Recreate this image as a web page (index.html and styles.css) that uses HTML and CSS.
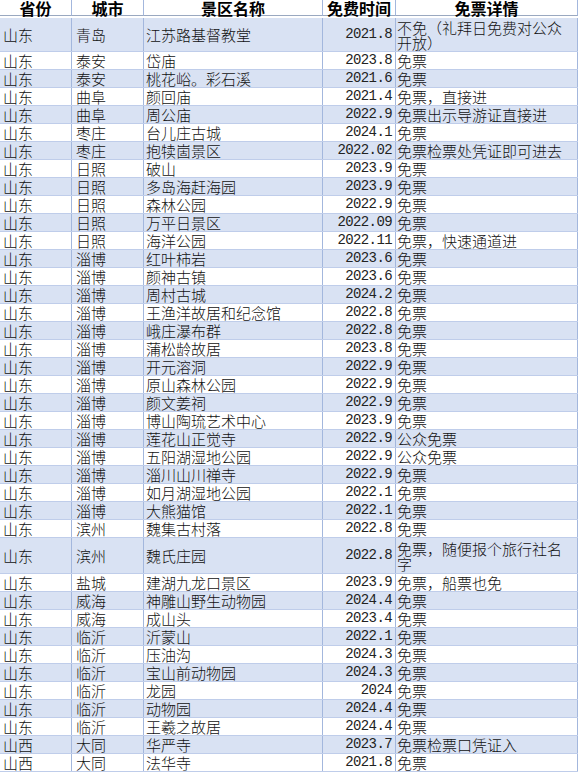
FILE: index.html
```html
<!DOCTYPE html>
<html lang="zh">
<head>
<meta charset="utf-8">
<title>免票景区</title>
<link rel="stylesheet" href="styles.css">
</head>
<body>
<div class="sheet">
  <div class="row head">
    <div class="c">省份</div><div class="c">城市</div><div class="c">景区名称</div><div class="c">免费时间</div><div class="c">免票详情</div>
  </div>
  <div class="row odd tall">
    <div class="c">山东</div><div class="c">青岛</div><div class="c">江苏路基督教堂</div><div class="c n">2021.8</div><div class="c d">不免（礼拜日免费对公众开放）</div>
  </div>
  <div class="row"><div class="c">山东</div><div class="c">泰安</div><div class="c">岱庙</div><div class="c n">2023.8</div><div class="c d">免票</div></div>
  <div class="row odd"><div class="c">山东</div><div class="c">泰安</div><div class="c">桃花峪。彩石溪</div><div class="c n">2021.6</div><div class="c d">免票</div></div>
  <div class="row"><div class="c">山东</div><div class="c">曲阜</div><div class="c">颜回庙</div><div class="c n">2021.4</div><div class="c d">免票，直接进</div></div>
  <div class="row odd"><div class="c">山东</div><div class="c">曲阜</div><div class="c">周公庙</div><div class="c n">2022.9</div><div class="c d">免票出示导游证直接进</div></div>
  <div class="row"><div class="c">山东</div><div class="c">枣庄</div><div class="c">台儿庄古城</div><div class="c n">2024.1</div><div class="c d">免票</div></div>
  <div class="row odd"><div class="c">山东</div><div class="c">枣庄</div><div class="c">抱犊崮景区</div><div class="c n">2022.02</div><div class="c d">免票检票处凭证即可进去</div></div>
  <div class="row"><div class="c">山东</div><div class="c">日照</div><div class="c">破山</div><div class="c n">2023.9</div><div class="c d">免票</div></div>
  <div class="row odd"><div class="c">山东</div><div class="c">日照</div><div class="c">多岛海赶海园</div><div class="c n">2023.9</div><div class="c d">免票</div></div>
  <div class="row"><div class="c">山东</div><div class="c">日照</div><div class="c">森林公园</div><div class="c n">2022.9</div><div class="c d">免票</div></div>
  <div class="row odd"><div class="c">山东</div><div class="c">日照</div><div class="c">万平日景区</div><div class="c n">2022.09</div><div class="c d">免票</div></div>
  <div class="row"><div class="c">山东</div><div class="c">日照</div><div class="c">海洋公园</div><div class="c n">2022.11</div><div class="c d">免票，快速通道进</div></div>
  <div class="row odd"><div class="c">山东</div><div class="c">淄博</div><div class="c">红叶柿岩</div><div class="c n">2023.6</div><div class="c d">免票</div></div>
  <div class="row"><div class="c">山东</div><div class="c">淄博</div><div class="c">颜神古镇</div><div class="c n">2023.6</div><div class="c d">免票</div></div>
  <div class="row odd"><div class="c">山东</div><div class="c">淄博</div><div class="c">周村古城</div><div class="c n">2024.2</div><div class="c d">免票</div></div>
  <div class="row"><div class="c">山东</div><div class="c">淄博</div><div class="c">王渔洋故居和纪念馆</div><div class="c n">2022.8</div><div class="c d">免票</div></div>
  <div class="row odd"><div class="c">山东</div><div class="c">淄博</div><div class="c">峨庄瀑布群</div><div class="c n">2022.8</div><div class="c d">免票</div></div>
  <div class="row"><div class="c">山东</div><div class="c">淄博</div><div class="c">蒲松龄故居</div><div class="c n">2023.8</div><div class="c d">免票</div></div>
  <div class="row odd"><div class="c">山东</div><div class="c">淄博</div><div class="c">开元溶洞</div><div class="c n">2022.9</div><div class="c d">免票</div></div>
  <div class="row"><div class="c">山东</div><div class="c">淄博</div><div class="c">原山森林公园</div><div class="c n">2022.9</div><div class="c d">免票</div></div>
  <div class="row odd"><div class="c">山东</div><div class="c">淄博</div><div class="c">颜文姜祠</div><div class="c n">2022.9</div><div class="c d">免票</div></div>
  <div class="row"><div class="c">山东</div><div class="c">淄博</div><div class="c">博山陶琉艺术中心</div><div class="c n">2023.9</div><div class="c d">免票</div></div>
  <div class="row odd"><div class="c">山东</div><div class="c">淄博</div><div class="c">莲花山正觉寺</div><div class="c n">2022.9</div><div class="c d">公众免票</div></div>
  <div class="row"><div class="c">山东</div><div class="c">淄博</div><div class="c">五阳湖湿地公园</div><div class="c n">2022.9</div><div class="c d">公众免票</div></div>
  <div class="row odd"><div class="c">山东</div><div class="c">淄博</div><div class="c">淄川山川禅寺</div><div class="c n">2022.9</div><div class="c d">免票</div></div>
  <div class="row"><div class="c">山东</div><div class="c">淄博</div><div class="c">如月湖湿地公园</div><div class="c n">2022.1</div><div class="c d">免票</div></div>
  <div class="row odd"><div class="c">山东</div><div class="c">淄博</div><div class="c">大熊猫馆</div><div class="c n">2022.1</div><div class="c d">免票</div></div>
  <div class="row"><div class="c">山东</div><div class="c">滨州</div><div class="c">魏集古村落</div><div class="c n">2022.8</div><div class="c d">免票</div></div>
  <div class="row odd tall2"><div class="c">山东</div><div class="c">滨州</div><div class="c">魏氏庄园</div><div class="c n">2022.8</div><div class="c d">免票，随便报个旅行社名字</div></div>
  <div class="row"><div class="c">山东</div><div class="c">盐城</div><div class="c">建湖九龙口景区</div><div class="c n">2023.9</div><div class="c d">免票，船票也免</div></div>
  <div class="row odd"><div class="c">山东</div><div class="c">威海</div><div class="c">神雕山野生动物园</div><div class="c n">2024.4</div><div class="c d">免票</div></div>
  <div class="row"><div class="c">山东</div><div class="c">威海</div><div class="c">成山头</div><div class="c n">2023.4</div><div class="c d">免票</div></div>
  <div class="row odd"><div class="c">山东</div><div class="c">临沂</div><div class="c">沂蒙山</div><div class="c n">2022.1</div><div class="c d">免票</div></div>
  <div class="row"><div class="c">山东</div><div class="c">临沂</div><div class="c">压油沟</div><div class="c n">2024.3</div><div class="c d">免票</div></div>
  <div class="row odd"><div class="c">山东</div><div class="c">临沂</div><div class="c">宝山前动物园</div><div class="c n">2024.3</div><div class="c d">免票</div></div>
  <div class="row"><div class="c">山东</div><div class="c">临沂</div><div class="c">龙园</div><div class="c n">2024</div><div class="c d">免票</div></div>
  <div class="row odd"><div class="c">山东</div><div class="c">临沂</div><div class="c">动物园</div><div class="c n">2024.4</div><div class="c d">免票</div></div>
  <div class="row"><div class="c">山东</div><div class="c">临沂</div><div class="c">王羲之故居</div><div class="c n">2024.4</div><div class="c d">免票</div></div>
  <div class="row odd"><div class="c">山西</div><div class="c">大同</div><div class="c">华严寺</div><div class="c n">2023.7</div><div class="c d">免票检票口凭证入</div></div>
  <div class="row"><div class="c">山西</div><div class="c">大同</div><div class="c">法华寺</div><div class="c n">2021.8</div><div class="c d">免票</div></div>
</div>
</body>
</html>
```

FILE: styles.css
```css
html, body {
  margin: 0;
  padding: 0;
  background: #ffffff;
}

.sheet {
  width: 578px;
  font-family: "Noto Sans CJK SC", "Noto Sans", sans-serif;
  font-size: 15px;
  font-weight: 300;
  color: #111;
}

.row {
  display: grid;
  grid-template-columns: 72px 72px 179px 73px 182px;
  height: 18px;
  box-sizing: border-box;
  border-bottom: 1px solid #bfcdea;
}

.row.odd {
  background: #d9e2f3;
}

.c {
  box-sizing: border-box;
  border-right: 1px solid #a3b7dd;
  padding: 0 0 0 3px;
  line-height: 17px;
  white-space: nowrap;
  display: flex;
  align-items: flex-end;
}

.c:nth-child(2) { padding-left: 4px; }
.c:nth-child(3) { padding-left: 2px; }

.c.d {
  padding: 0 4px 0 1px;
}

.c.n {
  justify-content: flex-end;
  padding: 0 3px 0 0;
  font-family: "Liberation Mono", "DejaVu Sans Mono", monospace;
  font-size: 14px;
  font-weight: 400;
  letter-spacing: -0.6px;
  color: #222;
}

.row.head {
  height: 18px;
  border-bottom: 2px solid #ffffff;
  background: #ffffff;
}

.row.head .c {
  justify-content: center;
  padding: 0;
  font-size: 16px;
  font-weight: 700;
  line-height: 16px;
  height: 16px;
  border-bottom: 1px solid #9aa8c0;
  align-items: flex-start;
  color: #000;
}

.row.tall {
  height: 34px;
}

.row.tall2 {
  height: 36px;
}

.row.tall .c, .row.tall2 .c {
  align-items: center;
}

.row.tall .c.d, .row.tall2 .c.d {
  white-space: normal;
  line-height: 15px;
  padding-top: 1px;
}
```
